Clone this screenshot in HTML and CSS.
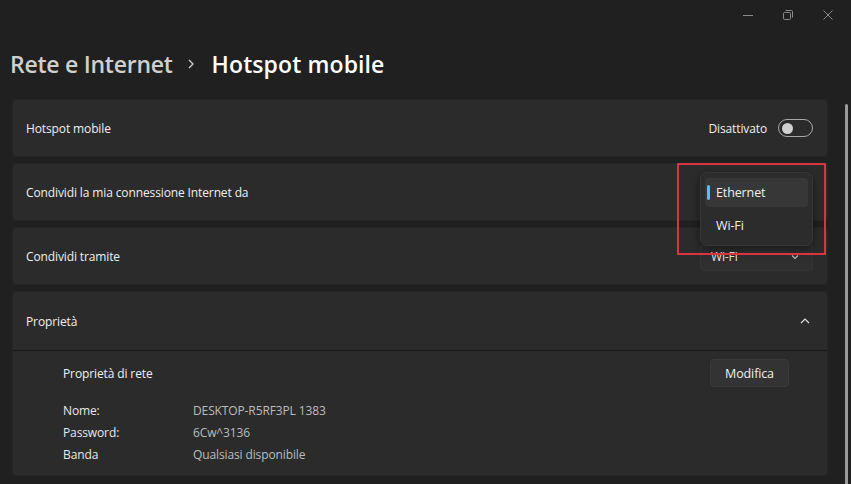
FILE: index.html
```html
<!DOCTYPE html>
<html lang="it">
<head>
<meta charset="utf-8">
<title>Hotspot mobile</title>
<link rel="stylesheet" href="styles.css">
</head>
<body>
<div class="window">
  <div class="titlebar">
    <div class="tb-btn">
      <svg width="12" height="12" viewBox="0 0 12 12"><path d="M1 6.5H11" stroke="#8a8a8a" stroke-width="1"/></svg>
    </div>
    <div class="tb-btn">
      <svg width="12" height="12" viewBox="0 0 12 12" fill="none" stroke="#8a8a8a" stroke-width="1"><rect x="1.5" y="3.5" width="7" height="7" rx="1"/><path d="M3.5 1.5H9.5a1 1 0 0 1 1 1V8.5"/></svg>
    </div>
    <div class="tb-btn">
      <svg width="12" height="12" viewBox="0 0 12 12"><path d="M1.5 1.5L10.5 10.5M10.5 1.5L1.5 10.5" stroke="#8a8a8a" stroke-width="1"/></svg>
    </div>
  </div>

  <h1 class="breadcrumb">
    <span class="crumb-parent">Rete e Internet</span>
    <svg class="crumb-sep" width="12" height="12" viewBox="0 0 12 12"><path d="M4 2L8 6L4 10" fill="none" stroke="#d0d0d0" stroke-width="1.3"/></svg>
    <span class="crumb-current">Hotspot mobile</span>
  </h1>

  <div class="cards">
    <div class="card">
      <span class="label">Hotspot mobile</span>
      <div class="right">
        <span class="toggle-text">Disattivato</span>
        <span class="toggle"><span class="knob"></span></span>
      </div>
    </div>

    <div class="card">
      <span class="label">Condividi la mia connessione Internet da</span>
    </div>

    <div class="card">
      <span class="label">Condividi tramite</span>
      <div class="combo">
        <span>Wi-Fi</span>
        <svg width="10" height="10" viewBox="0 0 10 10"><path d="M2 3.5L5 6.5L8 3.5" fill="none" stroke="#bdbdbd" stroke-width="1.1"/></svg>
      </div>
    </div>

    <div class="card expander">
      <div class="exp-head">
        <span class="label">Proprietà</span>
        <svg class="chev-up" width="12" height="12" viewBox="0 0 12 12"><path d="M2 8L6 4L10 8" fill="none" stroke="#e0e0e0" stroke-width="1.2"/></svg>
      </div>
      <div class="exp-body">
        <div class="body-head">
          <span class="label">Proprietà di rete</span>
          <button class="btn">Modifica</button>
        </div>
        <dl class="props">
          <dt>Nome:</dt><dd>DESKTOP-R5RF3PL 1383</dd>
          <dt>Password:</dt><dd>6Cw^3136</dd>
          <dt>Banda</dt><dd>Qualsiasi disponibile</dd>
        </dl>
      </div>
    </div>
  </div>

  <div class="popup">
    <div class="item selected"><span class="accent"></span>Ethernet</div>
    <div class="item">Wi-Fi</div>
  </div>
  <div class="highlight"></div>
  <div class="scrollbar"></div>
</div>
</body>
</html>
```

FILE: styles.css
```css
html, body {
  margin: 0;
  padding: 0;
  background: #202020;
}
.window {
  position: relative;
  width: 851px;
  height: 484px;
  overflow: hidden;
  background: #202020;
  font-family: "Open Sans", "Noto Sans", sans-serif;
  color: #ececec;
  font-size: 12px;
  letter-spacing: -0.12px;
}
.titlebar {
  height: 29px;
  display: flex;
  justify-content: flex-end;
  padding-right: 3px;
}
.tb-btn {
  width: 40px;
  display: flex;
  align-items: center;
  justify-content: center;
}
.breadcrumb {
  margin: 0;
  padding: 18px 0 0 10px;
  height: 52px;
  box-sizing: border-box;
  display: flex;
  align-items: center;
  font-size: 23px;
  font-weight: 600;
  letter-spacing: -0.25px;
  white-space: nowrap;
}
.crumb-parent {
  color: #cfcfcf;
}
.crumb-sep {
  margin: 0 15px 0 12px;
}
.crumb-current {
  color: #ffffff;
  letter-spacing: 0.1px;
}
.cards {
  margin: 18px 23px 0 12px;
  display: flex;
  flex-direction: column;
  gap: 6px;
}
.card {
  background: #2b2b2b;
  border: 1px solid #262626;
  border-radius: 4px;
  height: 58px;
  box-sizing: border-box;
  padding: 0 14px 0 13px;
  display: flex;
  align-items: center;
  justify-content: space-between;
}
.label {
  color: #f0f0f0;
}
.right {
  display: flex;
  align-items: center;
  gap: 11px;
}
.toggle-text {
  color: #f0f0f0;
}
.toggle {
  width: 30px;
  height: 16px;
  border: 1px solid #a8a8a8;
  border-radius: 10px;
  display: flex;
  align-items: center;
  padding-left: 3px;
  box-sizing: content-box;
}
.knob {
  width: 11px;
  height: 11px;
  border-radius: 50%;
  background: #d0d0d0;
}
.combo {
  width: 113px;
  height: 28px;
  box-sizing: border-box;
  margin-top: 1px;
  background: #2f2f2f;
  border: 1px solid #353535;
  border-radius: 4px;
  display: flex;
  align-items: center;
  justify-content: space-between;
  padding: 0 12px 0 10px;
  color: #e8e8e8;
}
.expander {
  height: 185px;
  display: block;
  padding: 0;
}
.exp-head {
  height: 58px;
  border-bottom: 1px solid #1a1a1a;
  display: flex;
  align-items: center;
  justify-content: space-between;
  padding: 0 16px 0 13px;
}
.exp-body {
  padding: 8px 38px 0 50px;
}
.body-head {
  display: flex;
  align-items: center;
  justify-content: space-between;
  height: 28px;
}
.btn {
  font: inherit;
  letter-spacing: inherit;
  color: #f0f0f0;
  background: #333333;
  border: 1px solid #3a3a3a;
  border-radius: 4px;
  height: 28px;
  width: 79px;
  padding: 0;
  font-size: 12.5px;
}
.props {
  margin: 14px 0 0 0;
  display: grid;
  grid-template-columns: 130px auto;
  row-gap: 3px;
  line-height: 19px;
}
.props dt {
  color: #e8e8e8;
}
.props dd {
  margin: 0;
  color: #bcbcbc;
}
.popup {
  position: absolute;
  left: 700px;
  top: 172px;
  width: 113px;
  height: 74px;
  box-sizing: border-box;
  background: #2c2c2c;
  border: 1px solid #363636;
  border-radius: 7px;
  box-shadow: 0 4px 10px rgba(0,0,0,0.45);
  padding: 5px 4px;
  display: flex;
  flex-direction: column;
  gap: 4px;
}
.item {
  position: relative;
  height: 29px;
  border-radius: 4px;
  display: flex;
  align-items: center;
  padding-left: 11px;
  color: #f0f0f0;
  font-size: 12.5px;
}
.item.selected {
  background: #373737;
}
.accent {
  position: absolute;
  left: 2px;
  top: 7px;
  width: 3px;
  height: 15px;
  border-radius: 2px;
  background: #4cc2ff;
}
.highlight {
  position: absolute;
  left: 677px;
  top: 163px;
  width: 149px;
  height: 92px;
  box-sizing: border-box;
  border: 2px solid #d9343f;
}
.scrollbar {
  position: absolute;
  left: 845px;
  top: 104px;
  width: 3px;
  height: 390px;
  border-radius: 2px;
  background: #9a9a9a;
}
```
